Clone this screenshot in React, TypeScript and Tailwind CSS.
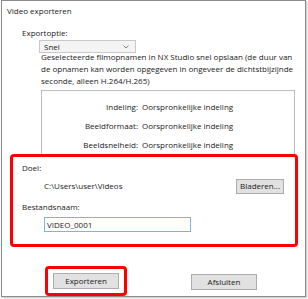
import React from "react";

const font = { fontFamily: '"Segoe UI", "Open Sans", "Noto Sans", sans-serif' };

const InfoRow = ({ label, value }: { label: string; value: string }) => (
  <div className="flex h-[19px] items-center">
    <span className="w-[100px] text-right pr-[4px]">{label}</span>
    <span>{value}</span>
  </div>
);

export default function App() {
  return (
    <div
      className="w-[308px] h-[299px] bg-white text-[8px] leading-[12px] text-[#1a1a1a] overflow-hidden"
      style={font}
    >
      <div className="ml-[1px] w-[305px] h-[297px] border border-[#8c8c8c] bg-white shadow-[1px_1px_2px_rgba(0,0,0,0.25)] flex flex-col">
        {/* title */}
        <div className="pl-[5px] pt-[4px] h-[16px]">Video exporteren</div>

        {/* export option */}
        <div className="pl-[20px] mt-[10px]">Exportoptie:</div>
        <div className="ml-[37px] mt-[1px] w-[97px] h-[13px] border border-[#c9c9c9] bg-[#f4f4f4] flex items-center justify-between pl-[4px] pr-[6px]">
          <span>Snel</span>
          <svg width="6" height="4" viewBox="0 0 6 4">
            <path d="M0.5 0.5 L3 3 L5.5 0.5" fill="none" stroke="#777" strokeWidth="0.9" />
          </svg>
        </div>
        <p className="ml-[39px] -mt-[2px] w-[258px]">
          Geselecteerde filmopnamen in NX Studio snel opslaan (de duur van de opnamen kan worden opgegeven in ongeveer de dichtstbijzijnde seconde, alleen H.264/H.265)
        </p>

        {/* info box */}
        <div className="ml-[39px] mt-[3px] w-[254px] h-[65px] border border-b-0 border-[#bdbdbd] pt-[6px] flex flex-col">
          <InfoRow label="Indeling:" value="Oorspronkelijke indeling" />
          <InfoRow label="Beeldformaat:" value="Oorspronkelijke indeling" />
          <InfoRow label="Beeldsnelheid:" value="Oorspronkelijke indeling" />
        </div>

        {/* destination, highlighted */}
        <div className="ml-[8px] w-[288px] h-[94px] border-[3px] border-[#ff0000] rounded-[4px] pl-[9px] pt-[5px]">
          <div>Doel:</div>
          <div className="mt-[4px] flex items-center h-[16px]">
            <span className="ml-[22px] w-[192px]">C:\Users\user\Videos</span>
            <button className="w-[48px] h-[15px] border border-[#adadad] bg-[#e1e1e1] text-[8px] leading-[12px]">
              Bladeren...
            </button>
          </div>
          <div className="mt-[7px]">Bestandsnaam:</div>
          <div className="ml-[22px] mt-[4px] w-[147px] h-[15px] border border-[#7ab4e8] flex items-center pl-[2px]">
            VIDEO_0001
          </div>
        </div>

        {/* buttons */}
        <div className="mt-[19px] flex items-start">
          <div className="ml-[43px] w-[82px] h-[30px] border-[3px] border-[#ff0000] rounded-[4px] flex items-center justify-center">
            <button className="w-[66px] h-[16px] border border-[#adadad] bg-[#e1e1e1] text-[8px] leading-[12px]">
              Exporteren
            </button>
          </div>
          <button className="ml-[64px] mt-[8px] w-[66px] h-[16px] border border-[#adadad] bg-[#e1e1e1] text-[8px] leading-[12px]">
            Afsluiten
          </button>
        </div>
      </div>
    </div>
  );
}
